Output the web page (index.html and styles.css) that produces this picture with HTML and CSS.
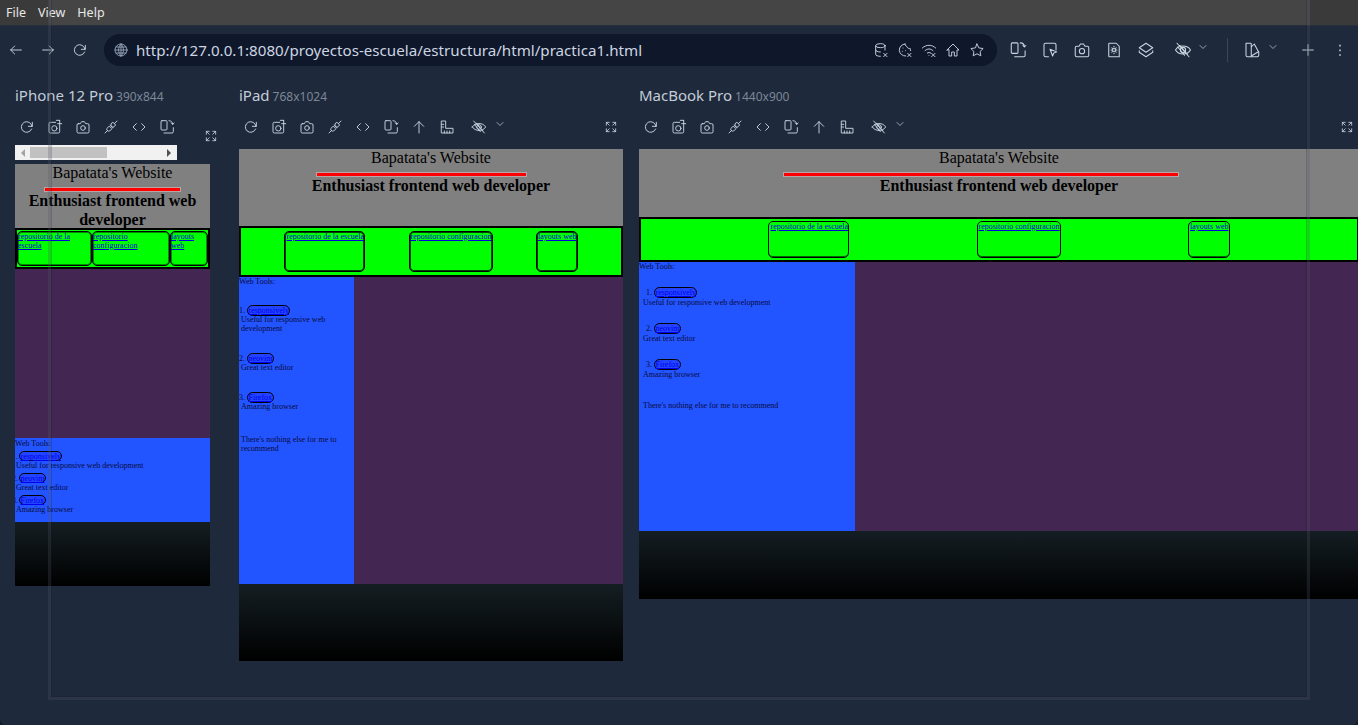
FILE: index.html
```html
<!DOCTYPE html>
<html lang="en">
<head>
<meta charset="utf-8">
<title>Responsively</title>
<link rel="stylesheet" href="styles.css">
</head>
<body>
<svg class="defs" width="0" height="0" aria-hidden="true">
  <symbol id="i-back" viewBox="0 0 24 24"><path d="M20 12H4M10 6l-6 6 6 6"/></symbol>
  <symbol id="i-forward" viewBox="0 0 24 24"><path d="M4 12h16M14 6l6 6-6 6"/></symbol>
  <symbol id="i-reload" viewBox="0 0 24 24"><path d="M19.500 11A8 8 0 1 0 19 15M20 5v6h-6"/></symbol>
  <symbol id="i-globe" viewBox="0 0 24 24"><circle cx="12" cy="12" r="9"/><path d="M3 12h18M4.500 7.500h15M4.500 16.500h15M12 3c-5 5-5 13 0 18M12 3c5 5 5 13 0 18M12 3v18"/></symbol>
  <symbol id="i-db" viewBox="0 0 24 24"><ellipse cx="11" cy="5.500" rx="7" ry="3"/><path d="M4 5.500v13c0 1.700 3 3 7 3M18 5.500V12M4 12c0 1.700 3 3 7 3M16 17l5 5M21 17l-5 5"/></symbol>
  <symbol id="i-cookie" viewBox="0 0 24 24"><path d="M12 3a9 9 0 1 0 1 18M12 3c0 3 2 3 3 4 0 2 3 3 5 3 .3 1 .300 2 .200 3"/><path d="M9 9h.01M8 14h.01M13 13h.01M16 17l5 5M21 17l-5 5"/></symbol>
  <symbol id="i-wifi" viewBox="0 0 24 24"><path d="M2 9c6-5.500 14-5.500 20 0M6 13c4-3.500 8-3.500 12 0M9.500 16.500c1.500-1 3.500-1 5 0M12 20v.01M16 17l5 5M21 17l-5 5"/></symbol>
  <symbol id="i-home" viewBox="0 0 24 24"><path d="M3 12l9-9 9 9h-3v9h-4v-6h-4v6H6v-9z"/></symbol>
  <symbol id="i-star" viewBox="0 0 24 24"><path d="M12 3l2.800 5.900 6.400.9-4.600 4.500 1.100 6.400L12 17.700l-5.700 3 1.100-6.400-4.600-4.500 6.400-.9z"/></symbol>
  <symbol id="i-rotate" viewBox="0 0 24 24"><rect x="3" y="2.500" width="9" height="14" rx="1.500"/><path d="M15 2.500c3 0 5.500 2 5.500 5.500M18.500 6l2 2 2-2M21.500 13v6a2 2 0 0 1-2 2H7.500"/></symbol>
  <symbol id="i-inspect" viewBox="0 0 24 24"><path d="M10 21H6a2 2 0 0 1-2-2V5a2 2 0 0 1 2-2h12a2 2 0 0 1 2 2v7"/><path d="M12 11l9 3.500-4 1.500-1.500 4z"/></symbol>
  <symbol id="i-camera" viewBox="0 0 24 24"><path d="M5 7h3l2-3h4l2 3h3a2 2 0 0 1 2 2v10a2 2 0 0 1-2 2H5a2 2 0 0 1-2-2V9a2 2 0 0 1 2-2z"/><circle cx="12" cy="13.500" r="3.500"/></symbol>
  <symbol id="i-shot" viewBox="0 0 24 24"><path d="M13 5H5a2 2 0 0 0-2 2v12a2 2 0 0 0 2 2h12a2 2 0 0 0 2-2v-8"/><circle cx="11" cy="14" r="4"/><path d="M16 7h6M19 2v8M14 2h5"/></symbol>
  <symbol id="i-plug" viewBox="0 0 24 24"><path d="M3 21l4-4M21 3l-4 4M9 11l-3 3a3 3 0 0 0 4 4l3-3zM11 9l4 4M15 5l4 4-3 3a3 3 0 0 1-4-4z"/></symbol>
  <symbol id="i-code" viewBox="0 0 24 24"><path d="M8 7l-5 5 5 5M16 7l5 5-5 5"/></symbol>
  <symbol id="i-up" viewBox="0 0 24 24"><path d="M12 21V4M5 11l7-7 7 7"/></symbol>
  <symbol id="i-ruler" viewBox="0 0 24 24"><path d="M4 3h6v11h11v7H4zM4 8h3M4 12h3M8 21v-3M12 21v-3M16 21v-3"/></symbol>
  <symbol id="i-eye" viewBox="0 0 24 24"><path d="M2 12c4-7 16-7 20 0-4 7-16 7-20 0z"/><circle cx="12" cy="12" r="3.500"/><path d="M4 3l16 18M8 6l10 12M5 8l9 11"/></symbol>
  <symbol id="i-chev" viewBox="0 0 24 24"><path d="M6 9l6 6 6-6"/></symbol>
  <symbol id="i-full" viewBox="0 0 24 24"><path d="M4 9V4h5M4 4l5 5M20 9V4h-5M20 4l-5 5M4 15v5h5M4 20l5-5M20 15v5h-5M20 20l-5-5"/></symbol>
  <symbol id="i-layers" viewBox="0 0 24 24"><path d="M12 3l9 6-9 6-9-6z"/><path d="M3 13v2l9 6 9-6v-2"/></symbol>
  <symbol id="i-doc" viewBox="0 0 24 24"><path d="M6 3h9l4 4v14H6a1 1 0 0 1-1-1V4a1 1 0 0 1 1-1z"/><circle cx="12" cy="12" r="2"/><path d="M12 7v1M12 16v1M8 12h1M15 12h1M9 9l1 1M14 14l1 1M15 9l-1 1M9 15l1-1"/></symbol>
  <symbol id="i-palette" viewBox="0 0 24 24"><path d="M4 3h6a1 1 0 0 1 1 1v17H6a2 2 0 0 1-2-2zM11 8l4-4 6 11v4a2 2 0 0 1-2 2H8M11 20l10-6"/></symbol>
  <symbol id="i-plus" viewBox="0 0 24 24"><path d="M12 4v16M4 12h16"/></symbol>
  <symbol id="i-dots" viewBox="0 0 24 24"><path d="M12 5v1M12 12v1M12 19v1"/></symbol>
</svg>

<div class="app">
  <div class="menubar"><span>File</span><span>View</span><span>Help</span></div>

  <div class="topbar">
    <button class="tb"><svg class="ic"><use href="#i-back"/></svg></button>
    <button class="tb tb-gap"><svg class="ic"><use href="#i-forward"/></svg></button>
    <button class="tb tb-gap"><svg class="ic"><use href="#i-reload"/></svg></button>
    <div class="address">
      <svg class="ic globe"><use href="#i-globe"/></svg>
      <span class="url">http://127.0.0.1:8080/proyectos-escuela/estructura/html/practica1.html</span>
      <div class="addr-actions">
        <svg class="ic"><use href="#i-db"/></svg>
        <svg class="ic"><use href="#i-cookie"/></svg>
        <svg class="ic"><use href="#i-wifi"/></svg>
        <svg class="ic"><use href="#i-home"/></svg>
        <svg class="ic"><use href="#i-star"/></svg>
      </div>
    </div>
    <div class="top-actions">
      <svg class="ic lg"><use href="#i-rotate"/></svg>
      <svg class="ic lg"><use href="#i-inspect"/></svg>
      <svg class="ic lg"><use href="#i-camera"/></svg>
      <svg class="ic lg"><use href="#i-doc"/></svg>
      <svg class="ic lg"><use href="#i-layers"/></svg>
      <svg class="ic lg eye"><use href="#i-eye"/></svg>
      <svg class="ic chev"><use href="#i-chev"/></svg>
      <span class="sep"></span>
      <svg class="ic lg palette"><use href="#i-palette"/></svg>
      <svg class="ic chev"><use href="#i-chev"/></svg>
      <svg class="ic plus"><use href="#i-plus"/></svg>
      <svg class="ic dots"><use href="#i-dots"/></svg>
    </div>
  </div>

  <div class="devices">
    <section class="device phone">
      <div class="dev-label">iPhone 12 Pro<small>390x844</small></div>
      <div class="dev-tools">
        <span class="dt"><svg class="ic"><use href="#i-reload"/></svg></span>
        <span class="dt"><svg class="ic"><use href="#i-shot"/></svg></span>
        <span class="dt"><svg class="ic"><use href="#i-camera"/></svg></span>
        <span class="dt"><svg class="ic"><use href="#i-plug"/></svg></span>
        <span class="dt"><svg class="ic"><use href="#i-code"/></svg></span>
        <span class="dt"><svg class="ic"><use href="#i-rotate"/></svg></span>
        <span class="full"><svg class="ic"><use href="#i-full"/></svg></span>
      </div>
      <div class="hscroll"><i class="arrow-l"></i><b class="thumb"></b><i class="arrow-r"></i></div>
      <div class="page">
        <header class="site-head">
          <h1>Bapatata's Website</h1>
          <hr>
          <h2>Enthusiast frontend web developer</h2>
        </header>
        <nav class="site-nav">
          <a href="#">repositorio de la escuela</a>
          <a href="#">repositorio configuracion</a>
          <a href="#">layouts web</a>
        </nav>
        <main class="site-main">
          <div class="content"></div>
          <aside class="tools">
            <div class="tools-title">Web Tools:</div>
            <ol>
              <li><span class="num">1.</span><a href="#">responsively</a><p>Useful for responsive web development</p></li>
              <li><span class="num">2.</span><a href="#">neovim</a><p>Great text editor</p></li>
              <li><span class="num">3.</span><a href="#">Firefox</a><p>Amazing browser</p></li>
            </ol>
          </aside>
        </main>
        <footer class="site-foot"></footer>
      </div>
    </section>

    <section class="device tablet">
      <div class="dev-label">iPad<small>768x1024</small></div>
      <div class="dev-tools">
        <span class="dt"><svg class="ic"><use href="#i-reload"/></svg></span>
        <span class="dt"><svg class="ic"><use href="#i-shot"/></svg></span>
        <span class="dt"><svg class="ic"><use href="#i-camera"/></svg></span>
        <span class="dt"><svg class="ic"><use href="#i-plug"/></svg></span>
        <span class="dt"><svg class="ic"><use href="#i-code"/></svg></span>
        <span class="dt"><svg class="ic"><use href="#i-rotate"/></svg></span>
        <span class="dt"><svg class="ic"><use href="#i-up"/></svg></span>
        <span class="dt"><svg class="ic"><use href="#i-ruler"/></svg></span>
        <span class="dt dt-eye"><svg class="ic"><use href="#i-eye"/></svg></span>
        <span class="dt-chev"><svg class="ic"><use href="#i-chev"/></svg></span>
        <span class="full"><svg class="ic"><use href="#i-full"/></svg></span>
      </div>
      <div class="page">
        <header class="site-head">
          <h1>Bapatata's Website</h1>
          <hr>
          <h2>Enthusiast frontend web developer</h2>
        </header>
        <nav class="site-nav">
          <a href="#">repositorio de la escuela</a>
          <a href="#">repositorio configuracion</a>
          <a href="#">layouts web</a>
        </nav>
        <main class="site-main">
          <aside class="tools">
            <div class="tools-title">Web Tools:</div>
            <ol>
              <li><span class="num">1.</span><a href="#">responsively</a><p>Useful for responsive web development</p></li>
              <li><span class="num">2.</span><a href="#">neovim</a><p>Great text editor</p></li>
              <li><span class="num">3.</span><a href="#">Firefox</a><p>Amazing browser</p></li>
            </ol>
            <p class="tools-end">There's nothing else for me to recommend</p>
          </aside>
          <div class="content"></div>
        </main>
        <footer class="site-foot"></footer>
      </div>
    </section>

    <section class="device laptop">
      <div class="dev-label">MacBook Pro<small>1440x900</small></div>
      <div class="dev-tools">
        <span class="dt"><svg class="ic"><use href="#i-reload"/></svg></span>
        <span class="dt"><svg class="ic"><use href="#i-shot"/></svg></span>
        <span class="dt"><svg class="ic"><use href="#i-camera"/></svg></span>
        <span class="dt"><svg class="ic"><use href="#i-plug"/></svg></span>
        <span class="dt"><svg class="ic"><use href="#i-code"/></svg></span>
        <span class="dt"><svg class="ic"><use href="#i-rotate"/></svg></span>
        <span class="dt"><svg class="ic"><use href="#i-up"/></svg></span>
        <span class="dt"><svg class="ic"><use href="#i-ruler"/></svg></span>
        <span class="dt dt-eye"><svg class="ic"><use href="#i-eye"/></svg></span>
        <span class="dt-chev"><svg class="ic"><use href="#i-chev"/></svg></span>
        <span class="full"><svg class="ic"><use href="#i-full"/></svg></span>
      </div>
      <div class="page">
        <header class="site-head">
          <h1>Bapatata's Website</h1>
          <hr>
          <h2>Enthusiast frontend web developer</h2>
        </header>
        <nav class="site-nav">
          <a href="#">repositorio de la escuela</a>
          <a href="#">repositorio configuracion</a>
          <a href="#">layouts web</a>
        </nav>
        <main class="site-main">
          <aside class="tools">
            <div class="tools-title">Web Tools:</div>
            <ol>
              <li><span class="num">1.</span><a href="#">responsively</a><p>Useful for responsive web development</p></li>
              <li><span class="num">2.</span><a href="#">neovim</a><p>Great text editor</p></li>
              <li><span class="num">3.</span><a href="#">Firefox</a><p>Amazing browser</p></li>
            </ol>
            <p class="tools-end">There's nothing else for me to recommend</p>
          </aside>
          <div class="content"></div>
        </main>
        <footer class="site-foot"></footer>
      </div>
    </section>
  </div>
  <div class="ghost"></div>
</div>
</body>
</html>
```
FILE: styles.css
```css
* { box-sizing: border-box; }
html, body { margin: 0; height: 100%; background: #151b26; }
body { overflow: hidden; font-family: "Noto Sans", sans-serif; color: #cbd5e1; }
.defs { position: absolute; }

.app {
  position: relative;
  width: 1358px;
  height: 725px;
  background: #1e293b;
  border-radius: 0 0 6px 6px;
  overflow: hidden;
  display: flex;
  flex-direction: column;
}

.ic {
  width: 16px;
  height: 16px;
  fill: none;
  stroke: currentColor;
  stroke-width: 1.4;
  stroke-linecap: round;
  stroke-linejoin: round;
  flex: none;
  display: block;
}

/* menu */
.menubar {
  height: 26px;
  flex: none;
  display: flex;
  align-items: center;
  padding: 0 0 1px 6px;
  gap: 12px;
  font-size: 12.5px;
  color: #e8e8e8;
  border-bottom: 1px solid #29303c;
  background: linear-gradient(to right, #3a3a3a 49px, #454545 49px, #454545 1310px, #3a3a3a 1310px);
}

/* top bar */
.topbar {
  height: 48px;
  flex: none;
  display: flex;
  align-items: center;
  padding-left: 8px;
}
.tb {
  width: 16px;
  height: 16px;
  padding: 0;
  border: 0;
  background: none;
  color: #cbd5e1;
  flex: none;
}
.tb-gap { margin-left: 16px; }
.address {
  width: 893px;
  height: 32px;
  flex: none;
  margin-left: 16px;
  padding: 0 12px 0 9px;
  border-radius: 16px;
  background: #0f172a;
  display: flex;
  align-items: center;
}
.globe { color: #94a3b8; }
.url {
  margin-left: 7px;
  font-size: 15.15px;
  color: #cbd5e1;
  white-space: nowrap;
}
.addr-actions {
  margin-left: auto;
  display: flex;
  gap: 8px;
}
.top-actions {
  display: flex;
  align-items: center;
  margin-left: 12px;
  flex: none;
}
.lg { width: 18px; height: 18px; margin-right: 14px; }
.lg.eye { margin-left: 5px; margin-right: 5px; }
.lg.palette { margin-right: 6px; }
.chev { width: 12px; height: 12px; margin-top: -6px; }
.sep {
  width: 1px;
  height: 24px;
  background: #3b4759;
  margin: 0 15px 0 18px;
}
.plus { width: 16px; height: 16px; margin-left: 20.5px; }
.dots { width: 16px; height: 16px; margin-left: 16.5px; stroke-width: 2.2; }

/* devices */
.devices {
  flex: 1;
  display: flex;
  gap: 16px;
  padding: 12px 0 0 15px;
  min-height: 0;
}
.device { flex: none; }
.phone { width: 208px; }
.tablet { width: 384px; }
.laptop { width: 720px; }

.dev-label {
  height: 20px;
  line-height: 19px;
  font-size: 15px;
  color: #c3ccd8;
  white-space: nowrap;
}
.dev-label small {
  font-size: 12px;
  color: #7c8797;
  margin-left: 3px;
}
.dev-tools {
  height: 28px;
  margin: 7px 0 8px -2px;
  display: flex;
  align-items: center;
}
.dt {
  width: 28px;
  height: 28px;
  display: flex;
  align-items: center;
  justify-content: center;
}
.dt-eye { margin-left: 4px; }
.dt-chev { margin-top: -6px; margin-left: 1px; }
.dt-chev .ic { width: 12px; height: 12px; }
.full {
  width: 24px;
  margin-left: auto;
  display: flex;
  justify-content: center;
}
.full .ic { width: 14px; height: 14px; }
.phone .dev-tools { margin-bottom: 4px; }
.phone .full { margin-top: 18px; }

.hscroll {
  width: 162px;
  height: 15px;
  margin-bottom: 4px;
  background: #f1f1f1;
  display: flex;
  align-items: center;
  padding: 0 6px;
}
.thumb { width: 77px; height: 11px; margin-left: 5px; background: #c1c1c1; }
.arrow-l {
  width: 0; height: 0;
  border: 4px solid transparent;
  border-right-color: #a3a3a3;
  border-left-width: 0;
}
.arrow-r {
  width: 0; height: 0;
  margin-left: auto;
  border: 4px solid transparent;
  border-left-color: #505050;
  border-right-width: 0;
}

/* page under test */
.page {
  width: 100%;
  overflow: hidden;
  font-family: "Liberation Serif", serif;
  color: #000;
  font-size: 8px;
  line-height: 9px;
}
.phone .page { width: 195px; }
.site-head { background: #808080; text-align: center; }
.site-head h1 {
  margin: 0;
  font-size: 16px;
  line-height: 18px;
  font-weight: 400;
}
.site-head hr {
  height: 5px;
  margin: 5px 0 0 20%;
  width: 55%;
  border: 1px solid #b9a5a5;
  background: #ff0000;
}
.site-head h2 {
  margin: -1px 0 0;
  font-size: 16px;
  line-height: 19px;
  font-weight: 700;
}
.phone .site-head { height: 64px; }
.tablet .site-head { height: 77px; }
.laptop .site-head { height: 68px; }
.phone .site-head hr { width: 70%; margin-left: 15%; }

.site-nav {
  background: #00ff00;
  border: 2px solid #000;
  display: flex;
  justify-content: space-evenly;
  padding-top: 3px;
}
.site-nav a {
  display: block;
  border: 1px solid #000;
  border-radius: 5px;
  padding: 0 0 0 1px;
  color: #0000dd;
  white-space: nowrap;
  box-shadow: inset 0 0 0 1px rgba(0, 0, 0, 0.75);
}
.tablet .site-nav { height: 51px; }
.tablet .site-nav a { height: 41px; }
.laptop .site-nav { height: 45px; padding-top: 2px; }
.laptop .site-nav a { height: 37px; box-shadow: inset 0 -1px 0 rgba(0, 0, 0, 0.6); }
.phone .site-nav {
  height: 41px;
  padding: 1px 0 0;
  display: grid;
  grid-template-columns: 75px 78px 38px;
  justify-content: start;
}
.phone .site-nav a { height: 35px; white-space: normal; padding: 0; box-shadow: inset 0 0 0 1px rgba(0, 90, 0, 0.7); }

.site-main { display: flex; }
.content { background: #432651; flex: 1; }
.tools {
  background: #2255ff;
  width: 30%;
  flex: none;
  color: #0a0a3c;
}
.tools ol { list-style: none; margin: 0; padding: 0; }
.tools li a {
  display: inline-block;
  height: 11px;
  line-height: 9px;
  border: 1px solid #000;
  border-radius: 6px;
  padding: 0 0.5px;
  background: #2244ff;
  color: #0000ee;
  vertical-align: top;
}
.tools li p { margin: 0; }
.num { display: inline-block; line-height: 11px; vertical-align: top; }

.phone .site-main { flex-direction: column; }
.phone .content { height: 169px; flex: none; }
.phone .tools { width: 100%; height: 84px; padding-top: 1px; }
.phone .tools ol { padding: 3px 0 0 1px; }
.phone .tools li { height: 22px; }
.phone .tools li a { height: 10px; }
.phone .tools li p { margin-top: -1px; }
.phone .num { margin-left: -4px; width: 7px; }

.tablet .site-main { height: 307px; }
.tablet .tools-title { margin-bottom: 19px; }
.tablet .tools ol { padding-left: 2px; }
.tablet .tools li { margin-bottom: 20px; }
.tablet .tools li p { margin-top: -1px; }
.tablet .num { margin-left: -2px; width: 8px; }
.tablet .tools-end { margin: 24px 0 0 2px; }

.laptop .site-main { height: 269px; }
.laptop .tools-title { margin-bottom: 16px; }
.laptop .tools ol { padding-left: 4px; }
.laptop .tools li { margin-bottom: 16px; }
.laptop .num { margin-left: 3px; width: 8px; }
.laptop .tools-end { margin: 22px 0 0 4px; }

.site-foot { background: linear-gradient(#141e22, #000); }
.phone .site-foot { height: 64px; }
.tablet .site-foot { height: 77px; }
.laptop .site-foot { height: 68px; }

/* translucent window outline lying over everything */
.ghost {
  position: absolute;
  left: 48px;
  top: -4px;
  width: 1262px;
  height: 704px;
  border: 3px solid rgba(80, 90, 100, 0.26);
  box-shadow: inset 0 0 0 1px rgba(15, 23, 42, 0.2);
  pointer-events: none;
}
```
